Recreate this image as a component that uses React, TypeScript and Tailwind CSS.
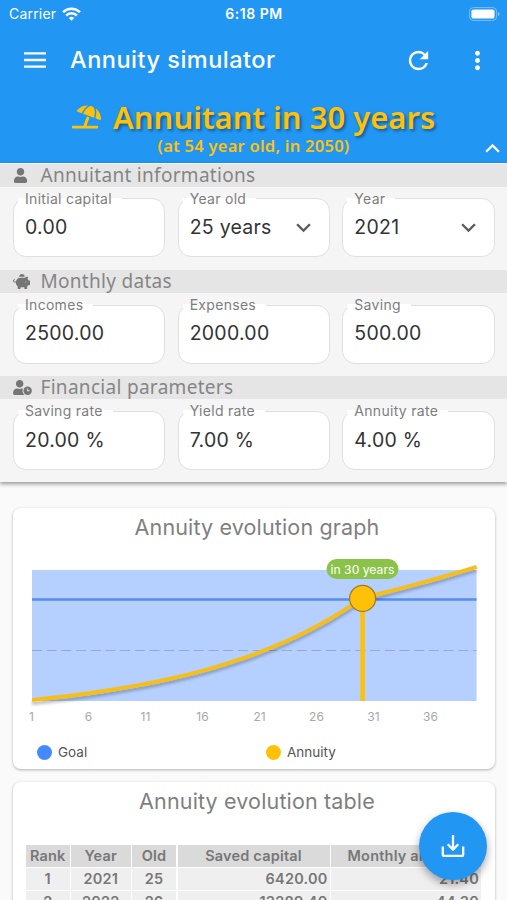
import type { ReactNode } from "react";
import { FaPiggyBank, FaUmbrellaBeach, FaUser, FaUserClock } from "react-icons/fa";
import { MdExpandLess, MdExpandMore, MdMoreVert, MdRefresh } from "react-icons/md";

const ROUNDED = "font-['Noto_Sans',sans-serif]";

type FieldProps = { label: string; value: string; select?: boolean };

const SECTIONS: { title: string; icon: ReactNode; fields: FieldProps[] }[] = [
  {
    title: "Annuitant informations",
    icon: <FaUser className="h-[15px] w-[15px]" />,
    fields: [
      { label: "Initial capital", value: "0.00" },
      { label: "Year old", value: "25 years", select: true },
      { label: "Year", value: "2021", select: true },
    ],
  },
  {
    title: "Monthly datas",
    icon: <FaPiggyBank className="h-[17px] w-[17px]" />,
    fields: [
      { label: "Incomes", value: "2500.00" },
      { label: "Expenses", value: "2000.00" },
      { label: "Saving", value: "500.00" },
    ],
  },
  {
    title: "Financial parameters",
    icon: <FaUserClock className="h-[15px] w-[19px]" />,
    fields: [
      { label: "Saving rate", value: "20.00 %" },
      { label: "Yield rate", value: "7.00 %" },
      { label: "Annuity rate", value: "4.00 %" },
    ],
  },
];

const ROWS = [
  ["1", "2021", "25", "6420.00", "21.40"],
  ["2", "2022", "26", "13289.40", "44.30"],
];

const TICKS = [1, 6, 11, 16, 21, 26, 31, 36];

// chart scale: one year = 11.4px, 2000 / month = 102px
const yearX = (n: number) => (n - 1) * 11.4;
const amountY = (v: number) => 138 - v * 0.051;

function annuity(n: number) {
  const atGoal = (y: number) => (6420 * ((Math.pow(1.07, y) - 1) / 0.07) * 0.04) / 12;
  return n <= 30 ? atGoal(n) : atGoal(30) * Math.pow(1.0267, n - 30);
}

const CURVE = Array.from({ length: 40 }, (_, i) => i + 1)
  .map((n, i) => `${i ? "L" : "M"}${yearX(n).toFixed(1)} ${amountY(annuity(n)).toFixed(1)}`)
  .join(" ");

function StatusBar() {
  return (
    <div className="grid h-[27px] grid-cols-3 items-center pl-[9px] pr-[7px] text-[14px] text-white">
      <div className="flex items-center gap-[6px]">
        <span className="tracking-[0.2px]">Carrier</span>
        <svg viewBox="0 0 19 14" className="h-[14px] w-[19px]" fill="none" stroke="white" strokeWidth="2.5">
          <path d="M1 5.2a12.2 12.2 0 0 1 17 0" />
          <path d="M4.1 8.5a7.8 7.8 0 0 1 10.8 0" />
          <path d="M9.5 13.8 6.7 11a4 4 0 0 1 5.6 0Z" fill="white" stroke="none" />
        </svg>
      </div>
      <span className="-ml-px text-center font-semibold tracking-[0.5px]">6:18 PM</span>
      <svg viewBox="0 0 31 14" className="h-[14px] w-[31px] justify-self-end">
        <rect x="0.6" y="0.6" width="27" height="12.8" rx="3.8" fill="none" stroke="white" strokeOpacity="0.4" />
        <rect x="2.4" y="2.4" width="23.2" height="9.2" rx="2.2" fill="white" />
        <path d="M29 5v4q1.6-.6 1.6-2T29 5Z" fill="white" fillOpacity="0.45" />
      </svg>
    </div>
  );
}

function Header() {
  return (
    <header className="h-[163px] bg-[#2196f3]">
      <StatusBar />
      <div className="flex h-[66px] items-center pl-[21px] pr-[15px] text-white">
        <svg viewBox="0 0 24 16" className="ml-[2px] h-[16px] w-[24px]" stroke="white" strokeWidth="2.4">
          <path d="M1 1.4h22M1 8h22M1 14.6h22" />
        </svg>
        <h1 className="ml-[23px] text-[23.5px] font-medium tracking-[0.5px]">Annuity simulator</h1>
        <MdRefresh className="ml-auto h-[29px] w-[29px]" />
        <MdMoreVert className="ml-[30px] h-[29px] w-[29px]" />
      </div>
      <div className={`relative text-[#ffc107] ${ROUNDED}`}>
        <div className="flex h-[43px] items-center pl-[72px] pt-[5px]">
          <FaUmbrellaBeach className="h-[24px] w-[29px]" />
          <span className="ml-[12px] whitespace-nowrap text-[31px] font-semibold leading-[36px] [text-shadow:2px_2px_3px_rgba(0,0,0,0.4)]">
            Annuitant in 30 years
          </span>
        </div>
        <p className="text-center text-[16.5px] font-semibold leading-[20px] tracking-[0.25px]">
          (at 54 year old, in 2050)
        </p>
        <MdExpandLess className="absolute right-0 top-[41px] h-[29px] w-[29px] text-white" />
      </div>
    </header>
  );
}

function Field({ label, value, select }: FieldProps) {
  return (
    <div className="relative flex h-[59px] items-center justify-between rounded-[13px] border border-[#e0e0e0] bg-white pl-[11px] pr-[11px]">
      <span className="absolute -top-[10.5px] left-[4px] whitespace-nowrap pl-[7px] pr-[10px] text-[14px] leading-[19px] tracking-[0.3px] text-[#7d7d7d]">
        <span className="absolute inset-x-0 top-[9px] h-[4px] bg-white" />
        <span className="relative">{label}</span>
      </span>
      <span className="text-[19.5px] tracking-[0.25px] text-[#333]">{value}</span>
      {select && <MdExpandMore className="h-[29px] w-[29px] text-[#5c5c5c]" />}
    </div>
  );
}

function Parameters() {
  return (
    <section className="relative h-[319px] bg-[#f5f5f5] pt-px shadow-[0_2px_4px_rgba(0,0,0,0.4)]">
      {SECTIONS.map((s) => (
        <div key={s.title} className="h-[106.2px]">
          <div className="flex h-[23px] items-center bg-[#e5e5e5] pl-[13px] text-[#757575]">
            <span className="w-[27.5px]">{s.icon}</span>
            <h2 className={`text-[19px] leading-[23px] tracking-[0.3px] text-[#858585] ${ROUNDED}`}>{s.title}</h2>
          </div>
          <div className="mt-[11.4px] grid grid-cols-3 gap-x-[12.5px] pl-[13px] pr-[12.5px]">
            {s.fields.map((f) => (
              <Field key={f.label} {...f} />
            ))}
          </div>
        </div>
      ))}
    </section>
  );
}

function Chart() {
  return (
    <svg viewBox="0 0 445 140" className="h-[140px] w-[445px] overflow-visible">
      <defs>
        <filter id="lineShadow" x="-10%" y="-10%" width="120%" height="130%">
          <feDropShadow dx="0" dy="3" stdDeviation="1.6" floodColor="#000" floodOpacity="0.25" />
        </filter>
      </defs>
      <rect x="0" y="7" width="444.6" height="131" fill="#b5d0ff" />
      <path d="M0 87.5h444.6" stroke="#97a9cd" strokeWidth="1" strokeDasharray="10 4.7" />
      <path d="M0 36.4h444.6" stroke="#558df2" strokeWidth="2.5" />
      <path d="M330.6 36v102" stroke="#ffc107" strokeWidth="4.6" />
      <path d={CURVE} fill="none" stroke="#f6be19" strokeWidth="4" filter="url(#lineShadow)" />
      <circle cx="330.6" cy="35.4" r="13" fill="#ffc107" stroke="#9c7b1e" strokeWidth="1.2" />
      <rect x="294.5" y="-4" width="72" height="20" rx="10" fill="#8bc34a" />
      <text x="330.5" y="10.6" textAnchor="middle" fontSize="12.2" fill="white">
        in 30 years
      </text>
    </svg>
  );
}

function Card({ title, className, children }: { title: string; className: string; children: ReactNode }) {
  return (
    <section className={`ml-[13px] mr-[12px] rounded-[8px] bg-white shadow-[0_1px_3px_rgba(0,0,0,0.3)] ${className}`}>
      <h2 className="h-[40px] pl-[6px] text-center text-[21.5px] leading-[38px] tracking-[0.15px] text-[#7f7f7f]">
        {title}
      </h2>
      {children}
    </section>
  );
}

function Legend({ color, label }: { color: string; label: string }) {
  return (
    <div className="flex items-center gap-[6px] text-[13.5px] text-[#555]">
      <span className={`h-[15px] w-[15px] rounded-full ${color}`} />
      {label}
    </div>
  );
}

export default function App() {
  return (
    <div className="relative h-[900px] w-[507px] overflow-hidden bg-[#fafafa] font-['Inter',sans-serif]">
      <Header />
      <Parameters />

      <Card title="Annuity evolution graph" className="mt-[26px] h-[261px]">
        <div className="pl-[18.5px] pt-[15px]">
          <Chart />
          <div className="flex pt-[5px]">
            {TICKS.map((t) => (
              <span
                key={t}
                className="-ml-[28.5px] mr-[28.5px] w-[57px] shrink-0 text-center text-[12px] leading-[18px] text-[#a8a8a8]"
              >
                {t}
              </span>
            ))}
          </div>
        </div>
        <div className="grid grid-cols-[229px_1fr] pl-[24px] pt-[16px]">
          <Legend color="bg-[#448aff]" label="Goal" />
          <Legend color="bg-[#ffc107]" label="Annuity" />
        </div>
      </Card>

      <Card title="Annuity evolution table" className="mt-[12.5px] h-[160px]">
        <div className="grid grid-cols-[43.5px_59.5px_44px_152px_150px] gap-x-[1.5px] gap-y-[1px] pl-[13px] pt-[23px] text-[14.5px] font-semibold leading-[22px] tracking-[0.2px] text-[#777]">
          {["Rank", "Year", "Old", "Saved capital", "Monthly annuity"].map((h) => (
            <div key={h} className="bg-[#dadada] text-center">
              {h}
            </div>
          ))}
          {ROWS.map((row) =>
            row.map((cell, i) => (
              <div key={row[0] + i} className={`bg-[#efefef] ${i > 2 ? "pr-[2px] text-right" : "text-center"}`}>
                {cell}
              </div>
            )),
          )}
        </div>
      </Card>

      <button className="absolute left-[419px] top-[812px] flex h-[68px] w-[68px] items-center justify-center rounded-full bg-[#2196f3] shadow-[0_4px_8px_rgba(0,0,0,0.35)]">
        <svg viewBox="0 0 24 24" className="h-[24px] w-[24px]" fill="none" stroke="white" strokeWidth="2.3">
          <path d="M12 1v14.5M6.7 10.3l5.3 5.3 5.3-5.3" strokeLinejoin="round" />
          <path d="M1.8 12.5v7.9q0 1.4 1.4 1.4h17.6q1.4 0 1.4-1.4v-7.9" />
        </svg>
      </button>
    </div>
  );
}
